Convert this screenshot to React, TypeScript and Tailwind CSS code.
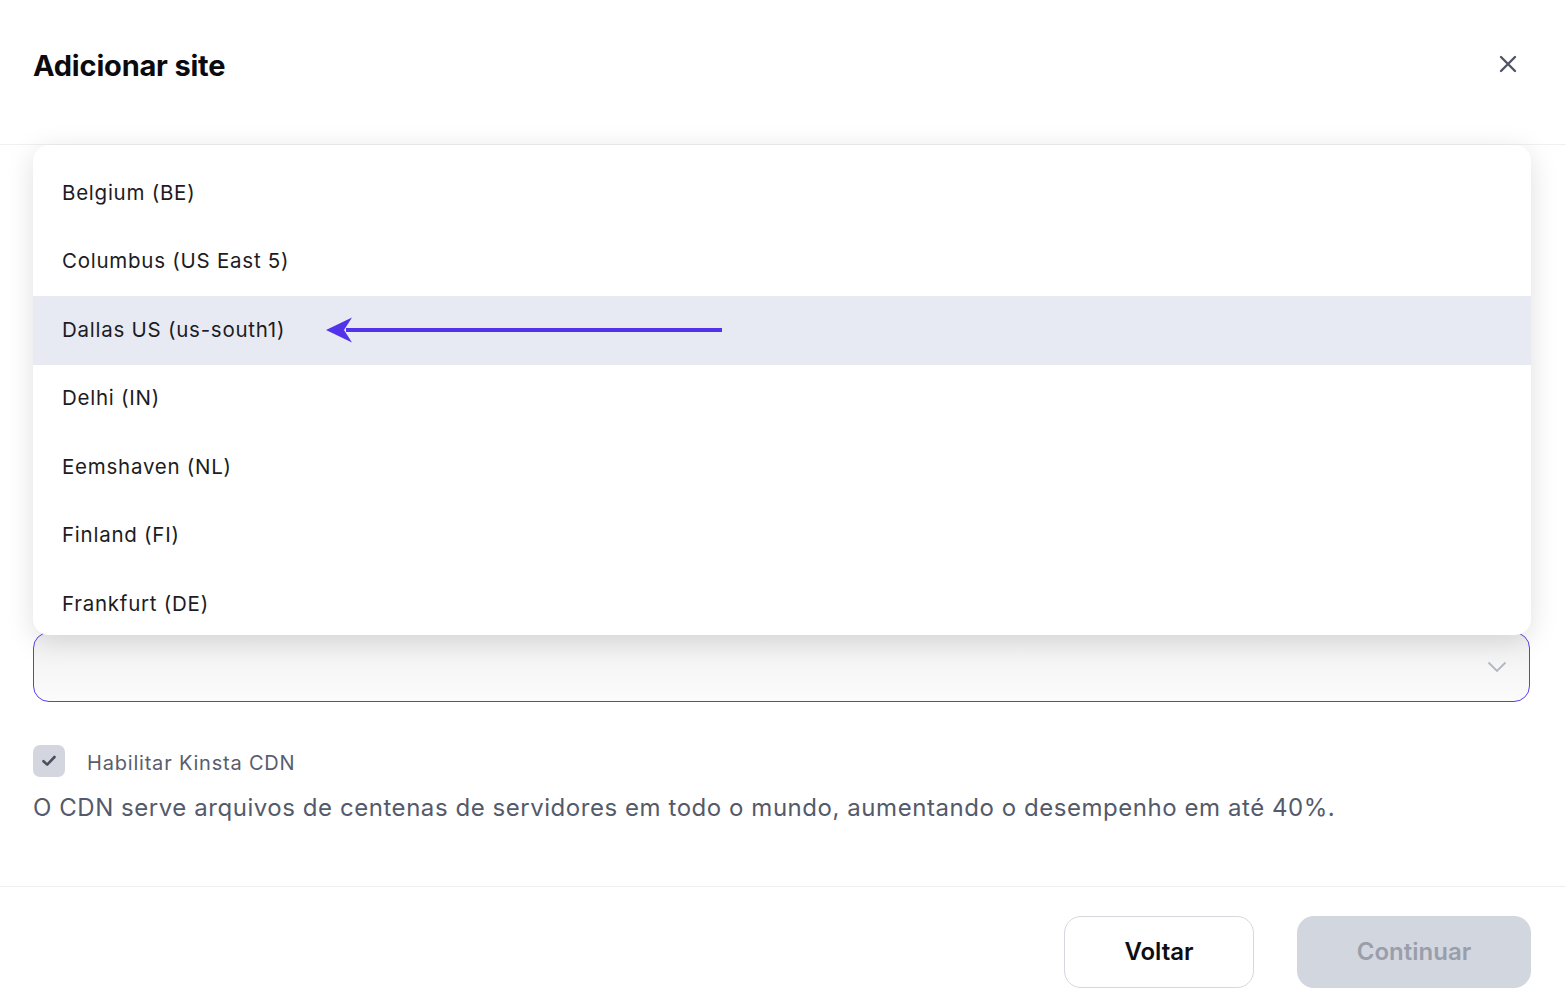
import React from "react";

const items = [
  "Belgium (BE)",
  "Columbus (US East 5)",
  "Dallas US (us-south1)",
  "Delhi (IN)",
  "Eemshaven (NL)",
  "Finland (FI)",
  "Frankfurt (DE)",
];

export default function App() {
  return (
    <div
      className="w-[1566px] h-[1006px] bg-white overflow-hidden flex flex-col"
      style={{ fontFamily: "Inter, 'Noto Sans', sans-serif" }}
    >
      {/* Header */}
      <div className="h-[145px] shrink-0 border-b border-[#f0f0f2] flex items-center justify-between pl-[33px] pr-[48px]">
        <h1 className="text-[29px] font-bold text-[#0b0b0f] tracking-[-0.2px] -mt-[13px]">
          Adicionar site
        </h1>
        <svg width="20" height="20" viewBox="0 0 20 20" className="-mt-[16px]">
          <path d="M3 3 L17 17 M17 3 L3 17" stroke="#4f5566" strokeWidth="2.4" strokeLinecap="round" />
        </svg>
      </div>

      {/* Body */}
      <div className="relative flex-1 flex flex-col pl-[33px] pr-[36px]">
        <div className="h-[487px] shrink-0" />
        <div className="h-[70px] shrink-0 rounded-[16px] border border-[#5b3fe6] bg-gradient-to-b from-[#f1f1f1] to-[#fbfbfb] flex items-center justify-end pr-[22px]">
          <svg width="20" height="12" viewBox="0 0 20 12">
            <path d="M1.5 1.5 L10 10 L18.5 1.5" fill="none" stroke="#b4b7c3" strokeWidth="1.8" />
          </svg>
        </div>

        <div className="mt-[43px] flex items-start gap-[22px]">
          <div className="w-[32px] h-[32px] rounded-[7px] bg-[#d3d6de] flex items-center justify-center">
            <svg width="14" height="12" viewBox="0 0 14 12">
              <path d="M1.5 6.2 L5.2 9.6 L12.5 2" fill="none" stroke="#4a5060" strokeWidth="2.6" strokeLinecap="round" strokeLinejoin="round" />
            </svg>
          </div>
          <span className="pt-[4px] text-[20px] leading-[28px] tracking-[0.8px] text-[#585e6e]">Habilitar Kinsta CDN</span>
        </div>
        <p className="mt-[13px] text-[24px] tracking-[0.55px] text-[#545a6a] leading-[36px]">
          O CDN serve arquivos de centenas de servidores em todo o mundo, aumentando o desempenho em até 40%.
        </p>

        {/* Dropdown overlay */}
        <div className="absolute left-[33px] right-[35px] top-0 h-[490px] bg-white rounded-[16px] shadow-[0_6px_28px_rgba(0,0,0,0.13)] pt-[14px] overflow-hidden">
          {items.map((it) => {
            const active = it.startsWith("Dallas");
            return (
              <div
                key={it}
                className={`h-[68.5px] flex items-center pl-[29px] text-[20.5px] tracking-[0.75px] text-[#1c1c22] ${active ? "bg-[#e8eaf3]" : ""}`}
              >
                <span>{it}</span>
                {active && (
                  <svg width="397" height="28" viewBox="0 0 397 28" className="ml-[41px]">
                    <path d="M20 14 L396 14" stroke="#5333ea" strokeWidth="4" />
                    <path d="M0 14 L26 1.5 L18 14 L26 26.5 Z" fill="#5333ea" />
                  </svg>
                )}
              </div>
            );
          })}
        </div>
      </div>

      {/* Footer */}
      <div className="h-[120px] shrink-0 border-t border-[#efeff1] flex justify-end items-start pt-[29px] pr-[35px] gap-[43px]">
        <button className="w-[190px] h-[72px] rounded-[17px] border border-[#d6d8de] bg-white text-[24px] font-semibold text-[#0d0d12]">
          Voltar
        </button>
        <button className="w-[234px] h-[72px] rounded-[17px] bg-[#d2d6df] text-[24px] font-semibold text-[#9a9eaa]">
          Continuar
        </button>
      </div>
    </div>
  );
}
